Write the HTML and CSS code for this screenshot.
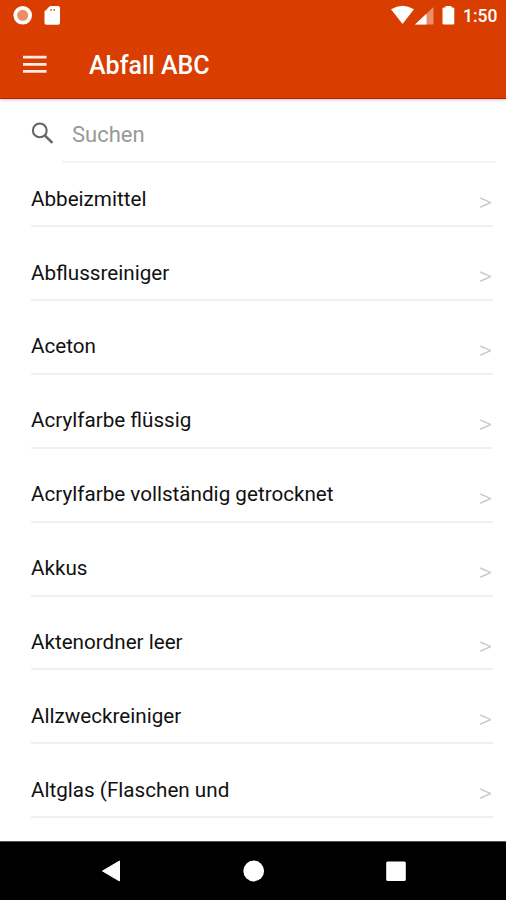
FILE: index.html
```html
<!DOCTYPE html>
<html lang="de">
<head>
<meta charset="utf-8">
<title>Abfall ABC</title>
<link rel="stylesheet" href="styles.css">
</head>
<body>
<div class="screen">
  <header class="header">
    <div class="status">
      <svg class="status-left" width="50" height="32" viewBox="0 0 50 32">
        <circle cx="9.700" cy="15.300" r="9.300" fill="#fff"/>
        <circle cx="9.700" cy="15.300" r="5.500" fill="#ee8c63"/>
        <path d="M37 6H45q2 0 2 2v15q0 1.700-2 1.700H33.500q-2 0-2-1.700V11.500z" fill="#fff"/>
        <path d="M37.500 9h1.500v2h-1.500zm3 0h1.500v2h-1.500z" fill="#e6703f"/>
      </svg>
      <svg class="status-right" width="66" height="32" viewBox="0 0 66 32">
        <path d="M0 9.300Q11.500 2.300 23 9.300L11.500 24z" fill="#fff"/>
        <path d="M42.500 7v17.500H24z" fill="#ee8d69"/>
        <path d="M35.500 13.700v10.800H24z" fill="#fff"/>
        <path d="M54.500 6h6v1.500H62q1.300 0 1.300 1.300V23q0 1.500-1.300 1.500h-9q-1.500 0-1.500-1.500V8.800q0-1.300 1.500-1.300h1.500z" fill="#fff"/>
      </svg>
      <span class="clock">1:50</span>
    </div>
    <div class="appbar">
      <svg class="menu" width="24" height="20" viewBox="0 0 24 20">
        <path d="M0 2.200h23.500M0 9.300h23.500M0 16.400h23.500" stroke="#ffece6" stroke-width="2.800"/>
      </svg>
      <h1 class="title">Abfall ABC</h1>
    </div>
  </header>
  <main class="content">
    <div class="search">
      <svg class="lens" width="24" height="24" viewBox="0 0 24 24">
        <circle cx="8.800" cy="8.400" r="6.900" fill="none" stroke="#666" stroke-width="2.100"/>
        <path d="M13.700 13.400l7.700 7.500" stroke="#666" stroke-width="2.600"/>
      </svg>
      <div class="field">Suchen</div>
    </div>
    <ul class="list">
      <li class="row"><span>Abbeizmittel</span><span class="chevron">&gt;</span></li>
      <li class="row"><span>Abflussreiniger</span><span class="chevron">&gt;</span></li>
      <li class="row"><span>Aceton</span><span class="chevron">&gt;</span></li>
      <li class="row"><span>Acrylfarbe flüssig</span><span class="chevron">&gt;</span></li>
      <li class="row"><span>Acrylfarbe vollständig getrocknet</span><span class="chevron">&gt;</span></li>
      <li class="row"><span>Akkus</span><span class="chevron">&gt;</span></li>
      <li class="row"><span>Aktenordner leer</span><span class="chevron">&gt;</span></li>
      <li class="row"><span>Allzweckreiniger</span><span class="chevron">&gt;</span></li>
      <li class="row"><span>Altglas (Flaschen und</span><span class="chevron">&gt;</span></li>
    </ul>
  </main>
  <nav class="navbar">
    <svg width="20" height="22" viewBox="0 0 20 22"><path d="M1.500 11L18.500 1v20z" fill="#fff" stroke="#fff" stroke-linejoin="round"/></svg>
    <svg width="22" height="22" viewBox="0 0 22 22"><circle cx="10.700" cy="11" r="10.400" fill="#fff"/></svg>
    <svg width="20" height="22" viewBox="0 0 20 22"><rect x=".2" y="1.500" width="19.600" height="19.500" rx="1.500" fill="#fff"/></svg>
  </nav>
</div>
</body>
</html>
```
FILE: styles.css
```css
* {
  box-sizing: border-box;
}

body {
  margin: 0;
  font-family: Roboto, "Liberation Sans", sans-serif;
  background: #fff;
}

.screen {
  display: flex;
  flex-direction: column;
  width: 506px;
  height: 900px;
  overflow: hidden;
}

.header {
  flex: none;
  height: 99px;
  color: #fff;
  background: #d93d00;
  border-bottom: 1px solid #cc1710;
  box-shadow: 0 1px 3px #c5c5c5;
}

.status {
  display: flex;
  height: 32px;
  padding-left: 13px;
}

.status-right {
  margin-left: 328px;
}

.clock {
  margin-left: 6px;
  font-size: 17.5px;
  font-weight: 500;
  line-height: 32px;
}

.appbar {
  display: flex;
  align-items: center;
  height: 66px;
  padding-left: 23px;
}

.title {
  margin: 0 0 0 42px;
  padding-top: 2px;
  font-size: 25px;
  font-weight: 500;
  line-height: 30px;
}

.content {
  flex: 1;
  min-height: 0;
}

.search {
  display: flex;
  height: 64px;
  padding: 0 10px 0 31px;
}

.lens {
  margin-top: 23px;
}

.field {
  flex: 1;
  margin-left: 7px;
  padding: 6px 0 0 10px;
  color: #999;
  font-size: 22px;
  line-height: 60px;
  border-bottom: 2px solid #f4f4f4;
}

.list {
  margin: 0;
  padding: 0 13px 0 31px;
  list-style: none;
}

.row {
  display: flex;
  align-items: flex-end;
  justify-content: space-between;
  height: 73.850px;
  padding-bottom: 14.5px;
  color: #111;
  font-size: 20.650px;
  line-height: 24px;
  border-bottom: 2px solid #f0f0f0;
}

.row:first-child {
  height: 64.300px;
}

.chevron {
  margin: 0 1px -3.700px 0;
  color: #c8c8c8;
  font-size: 26px;
  font-weight: 300;
}

.navbar {
  display: flex;
  flex: none;
  align-items: center;
  justify-content: space-between;
  height: 59px;
  padding: 0 100px 0 101px;
  background: #000;
  border-top: 1px solid #555;
}
```
